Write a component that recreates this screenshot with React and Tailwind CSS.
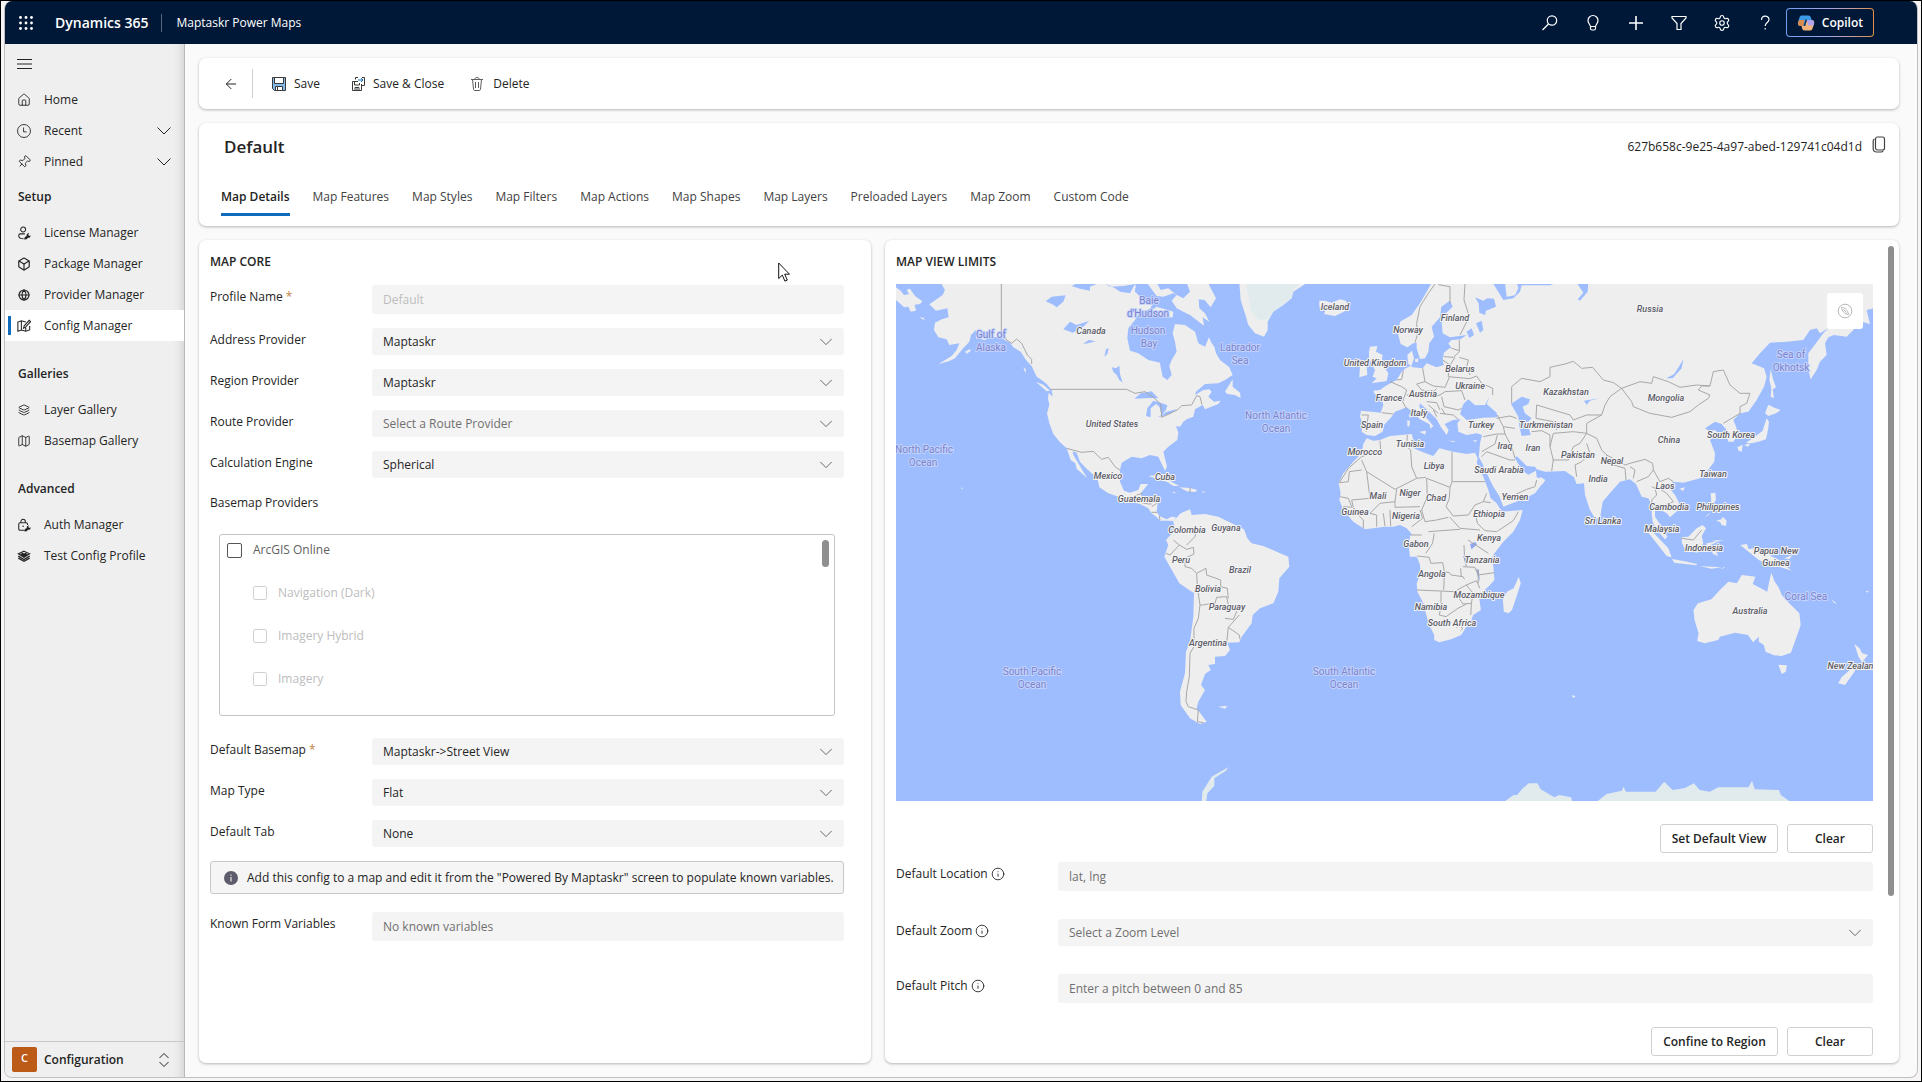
import { ArrowLeft, Box, Globe, House, Info, Layers, Map as MapIcon, Pin, Settings } from "lucide-react";

const tabs = [
  "Map Details",
  "Map Features",
  "Map Styles",
  "Map Filters",
  "Map Actions",
  "Map Shapes",
  "Map Layers",
  "Preloaded Layers",
  "Map Zoom",
  "Custom Code",
];

const navGroups = [
  {
    items: [
      { label: "Home", icon: House },
      { label: "Recent", icon: ClockIcon, expandable: true },
      { label: "Pinned", icon: PinIcon, expandable: true },
    ],
  },
  {
    title: "Setup",
    items: [
      { label: "License Manager", icon: LicenseIcon },
      { label: "Package Manager", icon: BoxIcon },
      { label: "Provider Manager", icon: GlobeIcon },
      { label: "Config Manager", icon: ConfigIcon, active: true },
    ],
  },
  {
    title: "Galleries",
    items: [
      { label: "Layer Gallery", icon: LayersIcon },
      { label: "Basemap Gallery", icon: MapIcon },
    ],
  },
  {
    title: "Advanced",
    items: [
      { label: "Auth Manager", icon: AuthIcon },
      { label: "Test Config Profile", icon: TestIcon },
    ],
  },
];

function PinIcon({ className }) {
  return <Pin className={`${className} rotate-45`} strokeWidth={1.5} />;
}

function BoxIcon({ className }) {
  return <Box className={className} strokeWidth={2} />;
}

function GlobeIcon() {
  return <Globe className="h-3 w-3" strokeWidth={2.4} />;
}

function LayersIcon() {
  return <Layers className="h-3 w-3" strokeWidth={1.8} />;
}

function ClockIcon({ className }) {
  return (
    <svg viewBox="0 0 16 16" className={className} fill="none" stroke="currentColor">
      <circle cx="8" cy="8" r="7.400" />
      <path d="M7.500 4v5H11" />
    </svg>
  );
}

function Chevron({ className }) {
  return (
    <svg viewBox="0 0 16 16" className={className} fill="none" stroke="currentColor">
      <path d="M1.500 4.500L8 11l6.500-6.500" />
    </svg>
  );
}

function LicenseIcon({ className }) {
  return (
    <svg viewBox="0 0 16 16" className={className} fill="none" stroke="currentColor" strokeWidth="1.2">
      <circle cx="7" cy="4" r="2.8" />
      <path d="M9 9H3.5C2 9 2 10.500 2 11c0 2 2 3.500 5.500 3.500" />
      <path d="M8 15.500l1-3 2-1c-.5-2 1-3.500 3-3l-1.300 1.600 1.300 1.400 1.500-1c.3 2-1.200 3.300-3 3L11 15z" fill="currentColor" stroke="none" />
    </svg>
  );
}

function ConfigIcon({ className }) {
  return (
    <svg viewBox="0 0 16 16" className={className} fill="none" stroke="currentColor" strokeWidth="1.200">
      <path d="M10 3.500L5 2 1 3.500v10.500l4-1.500 5 1.500 4.500-1.500V8M5 2v10.500" />
      <path d="M7.500 10.500l.7-2.700L14 1.500l1.500 1.500-5.700 6.300zM10 10v4" />
    </svg>
  );
}

function AuthIcon({ className }) {
  return (
    <svg viewBox="0 0 16 16" className={className} fill="none" stroke="currentColor" strokeWidth="1.200">
      <path d="M9 14H3.500C2.500 14 2 13.500 2 12.500V7c0-1 .5-1.500 1.500-1.500h7c1 0 1.500.5 1.500 1.500v1" />
      <path d="M4.500 5.500V4c0-3.500 5-3.500 5 0v1.500" />
      <circle cx="7" cy="9.500" r=".9" fill="currentColor" stroke="none" />
      <path d="M8.500 15.500l.7-3 2-1c-.5-2 1-3.300 2.800-3l-1.200 1.600 1.200 1.400 1.600-1c.3 2-1.200 3.300-3 3L11 15z" fill="currentColor" stroke="none" />
    </svg>
  );
}

function TestIcon({ className }) {
  return (
    <svg viewBox="0 0 16 16" className={className} fill="none" stroke="currentColor" strokeWidth="1.200">
      <path d="M8 2.500l6.500 3L8 9.500l-6.500-4z" />
      <path d="M4.500 6l2-1 1.500 1 1.500-1 2 1L8 9z" fill="currentColor" />
      <path d="M1.500 8.200L8 12l6.500-3.800M1.500 10.500L8 14l6.500-3.500" strokeWidth="1.500" />
    </svg>
  );
}

function SaveIcon({ close }) {
  if (close) {
    return (
      <svg viewBox="0 0 16 16" className="h-4 w-4" fill="none" stroke="#3b3a39">
        <path d="M8 5.500H2.500v9h9V8" />
        <path d="M4.500 5.500v3.500h5V7M5 14.500v-3h4v3M7 12v2" />
        <path d="M5.500 3.500v-2H8M12 1.500h2.500v8H12" />
        <path d="M8 4h5M11 2l2 2-2 2" stroke="#0f6cbd" />
      </svg>
    );
  }
  return (
    <svg viewBox="0 0 16 16" className="h-4 w-4" fill="none" stroke="#3b3a39">
      <path d="M1.500 1.500h13v13h-11l-2-2z" fill="#83b9eb" />
      <path d="M3.500 1.500h9v6h-9zM4.500 10.500h7v4h-7z" fill="#fff" />
      <path d="M6.500 11v3" />
    </svg>
  );
}

function TrashIcon() {
  return (
    <svg viewBox="0 0 14 16" className="h-4 w-3.5" fill="none" stroke="#605e5c">
      <path d="M1 3.500h12M5 3.500v-1c0-1.300 4-1.300 4 0v1M2.500 3.500l1 9.500c.1 1 .5 1.500 1.500 1.500h4c1 0 1.400-.5 1.500-1.500l1-9.500M5.500 6v6M8.500 6v6" />
    </svg>
  );
}

function CopyIcon() {
  return (
    <svg viewBox="0 0 14 18" className="h-[18px] w-3.5" fill="none" stroke="#424242" strokeWidth="1.200">
      <rect x="3.500" y="1" width="9" height="13" rx="2" />
      <path d="M2.500 3C1.500 3.500 1.200 4 1.200 5v7.500c0 2.500 1.300 3.500 3.500 3.500H9c1 0 1.800-.5 2-1.200" />
    </svg>
  );
}

function CopilotLogo() {
  return (
    <svg viewBox="0 0 18 18" className="h-[18px] w-[18px]">
      <path d="M5 1.500h6.500c1.500 0 2 1 2.500 2.500L15 7H9.500L8 12H3.500C1 12 .5 10 1 8l1.500-4.500C3 2 3.700 1.500 5 1.500z" fill="#3b9be8" />
      <path d="M1 9.500L2 6h5.500L6.300 12H3.500C1.500 12 .8 11 1 9.500z" fill="#d98a4c" />
      <path d="M13 16.500H7.500C6 16.500 5.300 15.500 5 14l-.5-2H8l2-6h4.500c2.500 0 3 2 2.500 4l-1.500 4.500c-.5 1.500-1.200 2-2.500 2z" fill="#f2b47c" />
      <path d="M10 6h4.500c2.500 0 3 2 2.500 4l-.5 1.500H11z" fill="#b3a4ee" />
      <path d="M8.500 5.500H10l-2 6.500H6.700z" fill="#12315f" />
    </svg>
  );
}

function HeaderIcon({ label, children }) {
  return (
    <button aria-label={label}>
      <svg viewBox="0 0 18 18" className="h-[18px] w-[18px]" fill="none" stroke="currentColor" strokeWidth="1.200">
        {children}
      </svg>
    </button>
  );
}

function Header() {
  return (
    <header className="flex h-[43px] shrink-0 items-center bg-[#001838] pl-3.5 pr-[43px] text-white">
      <button aria-label="App launcher">
        <svg viewBox="0 0 14 14" className="h-3.5 w-3.5" fill="currentColor">
          {[0, 5.5, 11].map((y) =>
            [0, 5.5, 11].map((x) => <circle key={`${x}-${y}`} cx={x + 1.5} cy={y + 1.5} r="1.400" />)
          )}
        </svg>
      </button>
      <span className="ml-[22px] text-[14px] font-semibold">Dynamics 365</span>
      <span className="ml-[13px] h-[18px] w-px bg-[#5a6478]" />
      <span className="ml-3.5 text-[12px]">Maptaskr Power Maps</span>
      <div className="ml-auto flex items-center gap-[25px]">
        <HeaderIcon label="Search">
          <circle cx="11" cy="6.500" r="4.700" />
          <path d="M7.500 10L1.500 16" />
        </HeaderIcon>
        <HeaderIcon label="Ideas">
          <path d="M6.500 12.500C6.300 10.500 4 9.500 4 6.500a5 5 0 0110 0c0 3-2.300 4-2.500 6zM6.500 12.500v2c0 1 .5 1.500 1.500 1.500h2c1 0 1.500-.5 1.500-1.500v-2" />
        </HeaderIcon>
        <HeaderIcon label="New">
          <path d="M9 2v14M2 9h14" strokeWidth="1.600" />
        </HeaderIcon>
        <HeaderIcon label="Filter">
          <path d="M2 2.500h14v1.500l-5 5.500V15.500H7V9.500L2 4z" />
        </HeaderIcon>
        <button aria-label="Settings">
          <Settings className="h-[18px] w-[18px]" strokeWidth={1.5} />
        </button>
        <HeaderIcon label="Help">
          <path d="M5.500 6c0-5 7.500-5 7.500-.5C13 8.500 9.200 8.500 9.200 12M9.200 14v1.600" />
        </HeaderIcon>
      </div>
      <button className="ml-3 rounded-[4px] bg-gradient-to-r from-[#6ea0f0] via-[#a9a3e6] to-[#e0903f] p-px">
        <span className="flex h-[27px] items-center gap-[7px] rounded-[3px] bg-[#001838] px-2.5 text-[12px] font-semibold">
          <CopilotLogo />
          Copilot
        </span>
      </button>
    </header>
  );
}

function NavItem({ label, icon: Icon, active, expandable }) {
  return (
    <a
      href="#"
      className={`relative flex h-[31px] items-center pl-3 pr-3 ${active ? "bg-white" : ""}`}
    >
      {active && <span className="absolute left-[3px] h-[19px] w-[3px] bg-[#0f6cbd]" />}
      <span className="flex w-3.5 justify-center">
        <Icon className="h-3.5 w-3.5 shrink-0" strokeWidth={1.5} />
      </span>
      <span className="ml-[13px]">{label}</span>
      {expandable && <Chevron className="ml-auto h-4 w-4" />}
    </a>
  );
}

function Sidebar() {
  return (
    <aside className="flex w-[180px] shrink-0 flex-col border-r border-[#b8b8b8] bg-[#efefef] shadow-[inset_-12px_0_12px_-12px_rgba(0,0,0,0.18)]">
      <button aria-label="Toggle navigation" className="flex h-10 items-center pl-3">
        <svg viewBox="0 0 15 10" className="h-2.5 w-[15px]" stroke="currentColor">
          <path d="M0 .5h15M0 5h15M0 9.500h15" />
        </svg>
      </button>
      <nav>
        {navGroups.map((group, i) => (
          <div key={i} className={i > 1 ? "mt-[13px]" : ""}>
            {group.title && (
              <h2 className="flex h-10 items-center pl-[13px] font-semibold">{group.title}</h2>
            )}
            {group.items.map((item) => (
              <NavItem key={item.label} {...item} />
            ))}
          </div>
        ))}
      </nav>
      <button className="mt-auto flex h-9 items-center border-t border-[#c8c8c8] pl-[7px] pr-3.5 font-semibold">
        <span className="flex h-[25px] w-[25px] items-start justify-center rounded-[2px] bg-[#bc5a17] pt-[3px] text-[11px] text-white">
          C
        </span>
        <span className="ml-[7px]">Configuration</span>
        <svg viewBox="0 0 12 16" className="ml-auto h-4 w-3" fill="none" stroke="currentColor">
          <path d="M1.500 6L6 1.500 10.500 6M1.500 10L6 14.500l4.500-4.500" />
        </svg>
      </button>
    </aside>
  );
}

function Card({ className, children }) {
  return (
    <section className={`rounded-[7px] bg-white shadow-[0_1px_3px_rgba(0,0,0,0.28)] ${className}`}>
      {children}
    </section>
  );
}

function CommandBar() {
  return (
    <Card className="flex h-[51px] shrink-0 items-center pl-6">
      <button aria-label="Back">
        <ArrowLeft className="h-4 w-4" strokeWidth={1.5} />
      </button>
      <span className="ml-[13px] h-[29px] w-px bg-[#d1d1d1]" />
      <button className="ml-[18px] flex items-center gap-[7px]">
        <SaveIcon /> Save
      </button>
      <button className="ml-[30px] flex items-center gap-[7px]">
        <SaveIcon close /> Save &amp; Close
      </button>
      <button className="ml-[26px] flex items-center gap-[9px]">
        <TrashIcon /> Delete
      </button>
    </Card>
  );
}

function RecordHeader() {
  return (
    <Card className="flex h-[103px] shrink-0 flex-col">
      <div className="flex h-12 items-center pl-[25px] pr-[13px]">
        <h1 className="text-[17px] font-semibold">Default</h1>
        <span className="ml-auto text-[12px]">627b658c-9e25-4a97-abed-129741c04d1d</span>
        <button aria-label="Copy id" className="mb-1 ml-2.5">
          <CopyIcon />
        </button>
      </div>
      <div role="tablist" className="mt-3 flex gap-[23px] pl-[22px]">
        {tabs.map((tab, i) => (
          <button
            key={tab}
            role="tab"
            aria-selected={i === 0}
            className={`h-[33px] border-b-[3px] pb-[3px] ${
              i === 0
                ? "border-[#0f6cbd] font-semibold text-[#242424]"
                : "border-transparent text-[#424242]"
            }`}
          >
            {tab}
          </button>
        ))}
      </div>
    </Card>
  );
}

function Field({ id, label, required, info, children }) {
  return (
    <div className="flex items-start">
      <label htmlFor={id} className="flex w-[162px] shrink-0 items-center gap-[3px] leading-[23px]">
        {label}
        {required && <span className="text-[#c4834a]">*</span>}
        {info && <Info className="h-3.5 w-3.5" strokeWidth={1.5} />}
      </label>
      {children}
    </div>
  );
}

function TextInput({ id, ...props }) {
  return (
    <input
      id={id}
      type="text"
      className="h-[29px] min-w-0 flex-1 rounded-[3px] bg-[#f4f4f4] px-[11px] placeholder:text-[#707070] disabled:placeholder:text-[#bdbdbd]"
      {...props}
    />
  );
}

function SelectInput({ id, value, muted }) {
  return (
    <div className="relative flex-1">
      <select
        id={id}
        className={`block h-[27px] w-full appearance-none rounded-[3px] bg-[#f4f4f4] px-[11px] ${
          muted ? "text-[#707070]" : "text-[#242424]"
        }`}
      >
        <option>{value}</option>
      </select>
      <Chevron className="pointer-events-none absolute right-[11px] top-[7px] h-3.5 w-3.5 text-[#555]" />
    </div>
  );
}

function BasemapList() {
  return (
    <div className="relative mx-[9px] mt-5 h-[182px] overflow-hidden rounded-[3px] border border-[#c4c4c4] pl-[7px] pt-[7px]">
      <label className="flex h-4 items-center gap-[11px] text-[#616161]">
        <input type="checkbox" className="h-[15px] w-[15px] appearance-none rounded-[2px] border border-[#555]" />
        ArcGIS Online
      </label>
      <div className="mt-[27px] flex flex-col gap-[27px] pl-[26px]">
        {["Navigation (Dark)", "Imagery Hybrid", "Imagery"].map((name) => (
          <label key={name} className="flex h-4 items-center gap-[11px] text-[#bdbdbd]">
            <input
              type="checkbox"
              disabled
              className="h-3.5 w-3.5 appearance-none rounded-[2px] border border-[#d1d1d1]"
            />
            {name}
          </label>
        ))}
      </div>
      <span className="absolute right-[5px] top-[5px] h-[27px] w-[7px] rounded-full bg-[#8f8f8f]" />
    </div>
  );
}

function MapCore() {
  return (
    <Card className="relative flex w-[672px] shrink-0 flex-col pl-[11px] pr-[27px] pt-[13px]">
      <h2 className="h-8 font-semibold leading-[18px]">MAP CORE</h2>
      <div className="flex flex-col gap-3.5">
        <Field id="profile" label="Profile Name" required>
          <TextInput id="profile" placeholder="Default" disabled />
        </Field>
        <Field id="address" label="Address Provider">
          <SelectInput id="address" value="Maptaskr" />
        </Field>
        <Field id="region" label="Region Provider">
          <SelectInput id="region" value="Maptaskr" />
        </Field>
        <Field id="route" label="Route Provider">
          <SelectInput id="route" value="Select a Route Provider" muted />
        </Field>
        <Field id="engine" label="Calculation Engine">
          <SelectInput id="engine" value="Spherical" />
        </Field>
        <div>
          <h3 className="leading-[22px]">Basemap Providers</h3>
          <BasemapList />
        </div>
      </div>
      <div className="mt-[22px] flex flex-col gap-3.5">
        <Field id="basemap" label="Default Basemap" required>
          <SelectInput id="basemap" value="Maptaskr->Street View" />
        </Field>
        <Field id="type" label="Map Type">
          <SelectInput id="type" value="Flat" />
        </Field>
        <Field id="tab" label="Default Tab">
          <SelectInput id="tab" value="None" />
        </Field>
        <div className="flex h-[33px] items-center gap-[9px] whitespace-nowrap rounded-[3px] border border-[#c8c8c8] bg-[#f5f5f5] pl-[13px]">
          <svg viewBox="0 0 14 14" className="h-3.5 w-3.5">
            <circle cx="7" cy="7" r="7" fill="#5c5c6c" />
            <path d="M7 6v4.500M7 3.500v1.200" stroke="#e8e8e8" strokeWidth="1.200" />
          </svg>
          Add this config to a map and edit it from the "Powered By Maptaskr" screen to populate known variables.
        </div>
      </div>
      <div className="mt-[18px]">
        <Field id="known" label="Known Form Variables">
          <TextInput id="known" placeholder="No known variables" />
        </Field>
      </div>
      <svg viewBox="0 0 12 20" className="absolute left-[579px] top-[22px] h-5 w-3">
        <path d="M.7 1v15.500l3.600-3.400 2.600 6 2.400-1-2.600-5.900h4.800z" fill="#fff" stroke="#111" />
      </svg>
    </Card>
  );
}

// Coast lines, in thirds of a pixel. Each sheet is placed by its own transform.
const northWest = [
  "18,22 32,32 42,45 57,42 50,30 60,26 75,48 97,64 90,72 74,74 78,92 62,95 55,80 42,82 32,72 18,60",
  "88,112 100,113 106,119 96,117",
  "152,8 165,30 158,45 125,68 118,73 138,92 172,85 176,112 155,118 135,128 132,150 145,172 170,178 178,195 208,190 200,210 185,228 145,253 178,243 195,235 215,210 238,185 243,165 258,150 258,175 285,180 310,170 335,175 360,188 370,202 392,215 408,240 425,258 440,290 455,300 470,312 485,330 488,350 476,338 474,355 478,375 471,400 478,430 490,462 510,487 530,505 542,540 556,550 560,566 575,580 592,595 578,572 565,550 550,525 548,514 560,518 570,545 585,562 605,580 622,595 628,622 655,640 690,652 720,665 750,672 775,685 785,700 800,712 812,722 835,722 852,724 858,712 845,710 830,718 808,708 800,695 803,670 785,662 758,660 752,640 775,612 752,612 745,630 720,638 702,632 690,605 690,570 695,548 725,530 755,535 780,525 805,530 812,545 825,572 831,560 820,515 835,500 862,480 865,458 858,438 870,440 880,425 890,418 910,410 915,388 938,375 945,388 985,372 992,362 972,365 955,350 965,335 958,328 940,330 915,345 918,335 945,312 985,310 1005,300 1020,290 1028,285 1018,262 990,240 978,220 973,200 965,190 957,172 945,200 925,190 915,155 885,135 855,132 848,160 855,185 860,215 845,240 838,258 845,285 832,300 818,290 812,262 810,248 775,240 745,220 720,212 712,175 715,145 735,120 748,100 780,86 792,64 760,60 740,40 735,8",
  "770,8 800,8 812,30 835,25 860,45 845,62 860,85 880,95 900,105 942,137 938,112 958,125 945,100 928,85 926,58 944,60 962,82 978,55 960,20 955,8 890,8 900,35 880,55 850,40 820,50 800,48",
  "778,95 800,80 850,95 848,112 820,112 795,108",
  "225,215 240,207 242,213 230,221",
  "438,306 460,314 480,332 470,334",
  "400,262 408,268 406,280",
  "775,588 800,585 830,598 868,618 850,618 832,606 800,596",
  "868,622 900,624 922,630 915,636 890,634",
  "848,635 860,638 850,640",
  "936,634 947,635 938,638",
  "214,622 219,625 215,628",
  "1005,335 1028,298 1028,320 1050,338 1052,354 1035,345 1012,342",
];

const northWestWater = [
  "467,64 485,50 527,46 520,65 500,82 490,74",
  "520,148 540,125 560,135 598,122 575,145 548,158",
  "578,192 596,180 617,184 600,188",
  "643,230 648,207 656,205 652,222",
  "665,262 670,275 680,285 688,300 698,308 690,282 688,257 678,265",
  "733,356 752,340 785,334 805,355 775,354",
  "790,362 812,368 832,376 828,390 815,405 808,380 798,372 782,385 782,412 768,408 772,385",
  "803,412 830,395 862,387 840,402",
  "545,18 565,8 630,8 600,20 600,32 570,26",
  "640,8 660,20 700,18 735,12 720,40 690,35 675,25",
  "735,24 770,40 760,50 735,36",
];

const northEast = [
  "635,8 620,35 600,70 575,105 540,125 535,165 542,192 562,202 580,190 590,188 590,205 600,237 615,235 625,215 628,190 642,170 635,140 660,112 664,80 690,62 698,80 672,105 665,130 668,160 690,172 740,165 722,178 695,180 685,190 695,205 688,205 672,218 668,240 672,255 650,262 620,250 608,265 578,262 565,252 562,225 576,212 582,235 575,256 555,266 545,275 530,300 500,316 480,330 460,332 464,342 485,352 490,375 482,398 455,395 423,392 420,410 428,430 425,455 440,465 465,468 488,455 492,435 515,410 525,395 545,388 560,382 578,395 600,418 628,432 632,446 640,438 612,405 598,380 600,370 625,393 650,418 662,440 680,465 686,450 674,432 700,420 722,418 712,430 715,455 740,465 770,460 786,465 780,490 778,515 776,530 786,548 800,580 820,620 838,648 850,680 915,655 945,640 975,600 950,592 948,572 925,584 905,570 885,535 890,528 920,558 945,560 950,568 975,575 1035,573 1062,592 1070,612 1092,610 1095,645 1110,690 1125,715 1140,715 1148,665 1165,645 1200,605 1230,598 1248,612 1265,650 1285,655 1298,680 1295,700 1298,725 1310,750 1335,778 1342,770 1322,735 1305,710 1305,685 1322,690 1340,700 1350,712 1375,690 1378,670 1365,645 1345,620 1360,605 1390,608 1440,595 1460,575 1483,545 1485,520 1470,480 1495,460 1485,450 1470,455 1455,445 1485,425 1505,432 1520,450 1525,485 1540,485 1550,470 1550,445 1540,420 1560,400 1585,395 1610,360 1632,320 1640,290 1632,265 1595,250 1620,220 1650,188 1700,185 1750,180 1770,150 1790,145 1800,160 1825,145 1810,160 1780,200 1765,220 1765,270 1772,298 1790,270 1800,245 1820,225 1815,190 1825,172 1842,165 1880,170 1905,145 1925,125 1950,132 1940,90 1962,85 1962,8",
  "58,8 62,60 78,110 85,135 105,160 132,170 143,150 143,125 160,95 190,75 215,55 220,35 262,8",
  "298,62 315,62 335,68 360,58 378,62 385,80 372,95 345,108 312,102 316,92 298,82",
  "450,200 472,198 468,215 488,225 485,245 495,265 505,280 500,303 455,310 470,295 458,290 465,270 455,250 447,235 447,215",
  "420,258 440,252 442,285 418,292",
  "585,238 595,235 594,246 586,246",
  "598,455 618,452 616,464",
  "562,420 570,424 568,440 562,438",
  "566,402 571,405 569,416",
  "685,482 708,483 700,486",
  "758,482 772,480 766,486",
  "440,475 460,482 480,480 510,468 575,462 580,480 572,500 605,515 640,528 658,505 700,515 740,522 765,518 773,535 770,548 790,590 805,630 812,655 830,670 845,695 908,690 900,720 880,755 850,785 815,830 570,830 566,795 578,765 560,745 540,735 520,740 495,740 435,748 400,725 370,690 358,660 362,640 356,610 370,580 400,545 425,520 430,492",
  "960,590 976,600 968,612 960,616",
  "1150,710 1162,722 1156,735 1148,730",
  // Japan, Sakhalin, Taiwan, Hainan, Philippines
  "1635,400 1645,374 1660,382 1682,390 1668,400 1645,408",
  "1640,415 1647,425 1645,445 1638,478 1615,485 1595,490 1578,488 1605,470 1628,452 1635,430",
  "1552,502 1568,494 1565,515 1556,512",
  "1572,495 1590,490 1585,500",
  "1652,268 1660,300 1668,322 1658,328 1662,355 1652,350 1654,325 1648,300",
  "1474,582 1484,580 1480,598",
  "1378,626 1394,622 1390,633",
  "1472,640 1486,638 1488,660 1478,672 1492,690 1475,680",
  "1488,722 1505,718 1508,710 1520,722 1518,738 1505,735 1500,726",
  "1454,712 1470,698 1465,706",
  // Sumatra and Borneo
  "1272,742 1295,752 1345,805 1355,832 1340,828 1310,790",
  "1385,772 1405,770 1430,745 1448,735 1458,745 1445,768 1450,790 1432,818 1398,812 1386,790",
  "1475,782 1510,780 1490,786",
];

const northEastWater = [
  "765,52 790,62 802,55 822,56 828,80 798,92 795,105 778,98 776,70",
  "818,8 855,8 860,50 885,46 895,25 890,8 1010,8 990,16 905,16 900,35 880,55 850,60",
  "740,155 755,145 762,165 748,174",
  "768,130 785,122 790,150 780,158",
  "720,402 730,372 745,358 765,376 795,375 808,350 800,372 830,398 832,412 790,413 740,420",
  "873,372 905,350 930,358 925,372 908,380 915,400 935,415 922,428 932,465 905,468 898,440 895,410",
  "1092,362 1138,355 1110,362 1100,374",
  "1390,238 1385,265 1358,295 1338,295 1362,283 1378,258",
  "1070,8 1105,8 1103,35 1080,62 1073,58 1090,38",
  "700,420 712,430 700,440 690,425",
];

const southAmerica = [
  "850,-56 872,-80 900,-92 905,-75 945,-78 985,-70 1025,-50 1062,-32 1072,-5 1085,10 1120,18 1160,35 1195,50 1198,80 1168,115 1165,155 1150,190 1110,205 1088,225 1085,250 1055,290 1048,307 1012,308 1020,330 1005,348 975,350 975,372 955,375 962,390 945,402 933,435 945,450 925,485 920,505 950,545 930,552 900,535 872,495 870,455 885,400 888,335 900,305 910,230 912,160 868,130 840,80 823,50 835,15 828,0 855,-30",
  "985,500 1012,497 1005,506",
];

const southEast = [
  "130,-30 392,-30 392,0 375,25 360,55 365,80 368,120 350,140 322,165 328,210 305,225 300,240 285,260 270,285 240,298 205,307 190,300 190,285 175,255 165,220 158,190 140,155 138,130 150,100 148,75 135,40 115,20 118,-10",
  "440,110 446,130 435,165 420,210 410,220 396,215 393,180 405,155 425,145",
  "957,210 970,190 1010,178 1035,150 1060,125 1085,130 1100,105 1140,110 1132,132 1175,155 1182,120 1187,98 1197,125 1208,140 1218,165 1240,190 1270,220 1274,255 1262,290 1245,338 1218,348 1195,346 1170,335 1165,315 1150,305 1150,290 1133,307 1118,285 1080,278 1035,290 1030,300 990,310 968,303 972,280 960,240",
  "1208,374 1233,376 1230,395 1218,402",
  "1433,312 1448,325 1456,340 1473,345 1455,367 1445,350",
  "1425,385 1435,392 1405,435 1385,430 1395,412",
  "893,57 930,64 968,72 965,76 900,68",
  "975,78 1010,80 1040,82 1010,86",
  "1035,88 1050,80 1048,84",
  "995,10 1030,4 1008,15 1020,28 1030,48 1015,42 1005,22 1000,38",
  "1095,15 1115,12 1120,28 1150,22 1190,50 1210,60 1225,75 1248,92 1215,82 1180,75 1150,60 1120,35",
  "1225,55 1250,45 1240,58",
  "1365,178 1382,192 1372,188",
  "1466,154 1476,152 1470,158",
  "596,466 608,468 602,474",
];

const ice = [
  "78,8 85,50 92,90 115,120 143,118 160,92 190,72 213,55 220,30 240,8",
];

const borders = {
  northWest: [
    "334,12 334,155 350,180 365,190 380,177 395,190 412,225 425,238 425,252",
    "482,328 710,328 735,340 765,335 790,352 812,372 815,412 862,390 875,377 905,375 920,347 930,350 936,374",
    "530,505 575,517 610,514 635,538 655,532 675,560 690,570",
    "735,660 740,645 758,640 M755,668 775,672 785,672 M785,680 800,670 M785,697 802,697 M808,708 810,720 M900,622 900,638",
    "900,690 888,712 895,728 915,732 920,752 915,790 M920,745 945,755 945,778 965,770 958,755 970,750 M985,718 1000,735 995,755 1005,775 1040,770 M845,785 870,790 890,805",
  ],
  northEast: [
    "585,188 592,165 590,130 600,80 625,40 645,12 M655,14 690,20 690,70 M735,12 732,60 748,110 720,165",
    "718,180 718,215 700,232 672,230 M695,205 718,212 M718,232 745,240 740,262 750,285 M668,240 690,255 705,232 M686,262 685,290 750,296 770,288 785,310 818,325 818,345 M608,265 615,305 640,318 675,322 688,292",
    "510,305 545,320 560,330 548,365 560,388 M530,300 545,298 550,272 M590,312 615,305 M590,312 605,330 640,335 650,325 M560,345 600,350 640,350 660,345 675,335 M675,335 725,332 735,360 M665,350 672,380 715,390 725,385 M620,365 650,368 660,390 M625,375 655,400 M640,390 650,410 M660,400 700,405 715,418 M665,385 675,402",
    "425,405 445,405 438,455 M485,398 520,402",
    "480,482 482,510 425,530 385,565 358,608 385,605 388,575 425,570 M440,575 525,628 590,595 575,560 572,510 560,500 562,465 M440,575 450,655 395,660 M425,540 440,575",
    "696,515 696,605 795,605 M620,595 690,622 688,655 678,680 M696,605 690,622 M620,595 622,650 605,690 615,725 M590,595 618,592 M530,628 525,665 480,670 450,700 M525,665 525,682 600,680 M360,650 385,655 395,680 M395,660 400,682 370,680 M400,690 430,720 430,745 M450,700 470,705 470,740 M490,700 495,738 M510,690 512,738 M600,690 608,715 575,740",
    "678,680 700,708 745,705 765,675 790,665 812,668 M790,665 800,640 M765,690 772,730 795,752 830,755 880,722 895,695 M690,712 720,745 780,750 M615,725 650,720 685,712 M625,755 720,748 M572,765 605,765",
    "830,415 870,408 890,415 M832,405 850,440 885,445 M850,440 855,462 M790,470 830,462 855,462 875,500 885,535 M785,515 825,492 832,465 M785,530 800,515 870,540 885,540 M850,660 920,628 945,620 950,600 M935,455 965,452 990,465 990,500 1000,540 995,573",
    "875,370 875,320 905,295 960,305 990,290 990,262 1035,252 1060,244 1085,265 1118,262 1150,300 1180,308 1205,325 1260,305 1295,310 1300,290 1345,305 1380,322 1430,315 1470,318",
    "1205,325 1235,365 1240,380 1290,400 1355,412 1410,395 1435,375 1465,355 1470,345 1435,330 1445,318 1470,318 1480,275 1510,270 1530,315 1560,340 1590,340 1580,370 1560,380 1560,400 1510,430",
    "1205,325 1170,350 1155,375 1145,405 1100,430 1100,460 1130,475 1145,510 1160,525 1215,555 1230,550 1275,538 1298,550 1300,570 1320,605 1345,595 1360,605",
    "950,375 1000,390 1050,405 1060,420 1100,405 1145,405 M950,375 948,415 1000,425 1010,450 M990,500 1000,460 1060,455 1100,460 1080,490 1060,500 1045,540 998,540 M1100,490 1110,520 1085,545 1065,555 1070,590 M1160,525 1165,550 1215,565 M1215,565 1218,600 M1230,560 1245,570 1240,595 M1300,570 1285,590 1250,605 M1295,620 1305,625 1310,645 1295,660 1300,690 M1310,620 1340,640 1360,665 1335,675",
    "1385,775 1420,780 1445,750",
  ],
  southAmerica: [
    "828,40 840,45 868,15 850,0 M868,15 890,28 910,22 912,42 885,55 885,80 905,85 920,100 922,140 912,158 M920,100 948,85 950,105 992,120 992,140 1012,145 1015,175 M922,140 930,195 940,195 965,190 975,190 980,172 1010,170 1015,195 1040,215 1030,238 1005,235 M1048,225 1015,262 1048,285 1050,298 M1015,262 1010,308 M930,195 925,235 912,265 912,320 900,340 898,410 890,455 888,485 895,500 925,510 922,545 940,548 M890,15 915,-10 920,-40",
  ],
  southEast: [
    "140,48 175,52 180,70 215,68 220,95 235,98 240,105 275,110 280,118 M138,150 250,155 M210,155 210,200 205,225 225,230 260,205 285,192 M220,98 218,150 M165,40 185,10 190,-20 M275,80 310,82 320,105 368,98 M320,88 320,130 M250,155 285,135 315,122 325,145 M250,155 275,192 300,190 305,160 285,135 M300,190 298,225 M270,110 268,85 M278,15 280,60 285,80 M290,0 350,40 M255,262 265,258 275,265 268,272",
  ],
};

const places = [
  ["Canada", 1091, 334], ["United States", 1112, 427], ["Mexico", 1108, 479], ["Cuba", 1165, 480],
  ["Guatemala", 1139, 502], ["Colombia", 1187, 533], ["Guyana", 1226, 531], ["Peru", 1181, 563],
  ["Brazil", 1240, 573], ["Bolivia", 1208, 592], ["Paraguay", 1227, 610], ["Argentina", 1208, 646],
  ["Iceland", 1335, 310], ["Norway", 1408, 333], ["Finland", 1455, 321], ["United Kingdom", 1375, 366],
  ["Belarus", 1460, 372], ["Ukraine", 1470, 389], ["France", 1389, 401], ["Austria", 1423, 397],
  ["Italy", 1419, 416], ["Spain", 1372, 428], ["Turkey", 1481, 428], ["Turkmenistan", 1546, 428],
  ["Morocco", 1365, 455], ["Tunisia", 1410, 447], ["Libya", 1434, 469], ["Iraq", 1505, 449],
  ["Iran", 1533, 451], ["Saudi Arabia", 1499, 473], ["Mali", 1378, 499], ["Niger", 1410, 496],
  ["Chad", 1436, 501], ["Yemen", 1515, 500], ["Guinea", 1355, 515], ["Nigeria", 1406, 519],
  ["Ethiopia", 1489, 517], ["Kenya", 1489, 541], ["Gabon", 1416, 547], ["Tanzania", 1482, 563],
  ["Angola", 1432, 577], ["Mozambique", 1479, 598], ["Namibia", 1431, 610], ["South Africa", 1452, 626],
  ["Russia", 1650, 312], ["Kazakhstan", 1566, 395], ["Mongolia", 1666, 401], ["China", 1669, 443],
  ["South Korea", 1731, 438], ["Pakistan", 1578, 458], ["Nepal", 1612, 464], ["India", 1598, 482],
  ["Taiwan", 1713, 477], ["Laos", 1665, 489], ["Cambodia", 1669, 510], ["Philippines", 1718, 510],
  ["Sri Lanka", 1603, 524], ["Malaysia", 1662, 532], ["Indonesia", 1704, 551], ["Papua New", 1776, 554],
  ["Guinea", 1776, 566], ["Australia", 1750, 614], ["New Zealand", 1853, 669],
];

const seas = [
  ["Gulf of", 991, 338], ["Alaska", 991, 351], ["Baie", 1149, 304], ["d'Hudson", 1148, 317],
  ["Hudson", 1148, 334], ["Bay", 1149, 347], ["Labrador", 1240, 351], ["Sea", 1240, 364],
  ["North Atlantic", 1276, 419], ["Ocean", 1276, 432], ["North Pacific", 924, 453], ["Ocean", 923, 466],
  ["South Pacific", 1032, 675], ["Ocean", 1032, 688], ["South Atlantic", 1344, 675], ["Ocean", 1344, 688],
  ["Sea of", 1791, 358], ["Okhotsk", 1791, 371], ["Coral Sea", 1806, 600],
];

function Shapes({ list, fill = "#eeeeee" }) {
  return list.map((points, i) => <polygon key={i} points={points} fill={fill} />);
}

function Lines({ list }) {
  return list.map((d, i) => (
    <path key={i} d={`M${d}`} fill="none" stroke="#a3a3a3" strokeWidth="2.800" strokeLinejoin="round" />
  ));
}

function WorldMap() {
  return (
    <svg
      viewBox="896 284 977 517"
      preserveAspectRatio="xMidYMid slice"
      className="block h-[517px] w-full bg-[#9ebdff]"
      role="img"
      aria-label="World map"
    >
      <g transform="translate(890 280) scale(.33333)">
        <Shapes list={northWest} />
        <Shapes list={northWestWater} fill="#9ebdff" />
        <Lines list={borders.northWest} />
      </g>
      <g transform="translate(890 540) scale(.33333)">
        <Shapes list={southAmerica} />
        <Lines list={borders.southAmerica} />
        <Shapes list={["935,790 937,755 965,710 1000,690 1015,682 1008,692 973,715 973,738 952,760 948,790"]} fill="#e1ebed" />
      </g>
      <g transform="translate(1220 280) scale(.33333)">
        <Shapes list={northEast} />
        <Shapes list={northEastWater} fill="#9ebdff" />
        <Shapes list={ice} fill="#e1ebed" />
      </g>
      <g transform="translate(1370 540) scale(.33807 .33333)">
        <Shapes list={southEast} />
        <Shapes list={["296,12 312,6 316,14 300,28", "286,78 280,60 275,48 283,50", "315,85 322,92 325,125 318,105"]} fill="#8fa8f0" />
        <Lines list={borders.southEast} />
        <Shapes
          list={[
            "390,790 425,765 435,765 452,745 470,730 495,730 505,748 545,772 560,765 595,772 598,790",
            "665,790 700,762 745,752 750,740 757,755 845,755 870,725 895,750 930,745 958,730 975,750 1005,755 1030,742 1120,742 1130,722 1138,748 1210,750 1215,765 1250,790",
          ]}
          fill="#e1ebed"
        />
      </g>
      <g transform="translate(1220 280) scale(.33333)">
        <Lines list={borders.northEast} />
      </g>
      <g
        textAnchor="middle"
        fontFamily="Roboto, sans-serif"
        paintOrder="stroke"
        strokeLinejoin="round"
        strokeWidth="2"
      >
        <g fontSize="10" fill="#7b83cf" stroke="#c3d3fb">
          {seas.map(([name, x, y]) => (
            <text key={`${name}${x}`} x={x} y={y}>
              {name}
            </text>
          ))}
        </g>
        <g fontSize="9" fontStyle="italic" fontWeight="500" fill="#5c5c66" stroke="#f4f4f6">
          {places.map(([name, x, y]) => (
            <text key={`${name}${x}`} x={x} y={y}>
              {name}
            </text>
          ))}
        </g>
      </g>
    </svg>
  );
}

function OutlineButton({ className, children }) {
  return (
    <button className={`h-[29px] rounded-[3px] border border-[#d1d1d1] font-semibold ${className}`}>
      {children}
    </button>
  );
}

function MapViewLimits() {
  return (
    <Card className="relative flex min-w-0 flex-1 flex-col pl-[11px] pr-[26px] pt-[13px]">
      <h2 className="h-[31px] font-semibold leading-[18px]">MAP VIEW LIMITS</h2>
      <div className="relative">
        <WorldMap />
        <button
          aria-label="Reset bearing"
          className="absolute right-2.5 top-[9px] flex h-9 w-9 items-center justify-center rounded-[3px] bg-white"
        >
          <svg viewBox="0 0 16 16" className="h-4 w-4" fill="none" stroke="#b5b5b5">
            <circle cx="8" cy="8" r="6.800" />
            <path d="M4.500 4.500c3-.5 6.500 3 7 7-3.500 0-6.500-3.500-7-7zM6.500 6.500l3 3" />
          </svg>
        </button>
      </div>
      <div className="mt-[23px] flex justify-end gap-[9px]">
        <OutlineButton className="w-[118px]">Set Default View</OutlineButton>
        <OutlineButton className="w-[86px]">Clear</OutlineButton>
      </div>
      <div className="mt-[9px] flex flex-col gap-7">
        <Field id="location" label="Default Location" info>
          <TextInput id="location" placeholder="lat, lng" />
        </Field>
        <Field id="zoom" label="Default Zoom" info>
          <SelectInput id="zoom" value="Select a Zoom Level" muted />
        </Field>
        <Field id="pitch" label="Default Pitch" info>
          <TextInput id="pitch" placeholder="Enter a pitch between 0 and 85" />
        </Field>
      </div>
      <div className="mt-6 flex justify-end gap-[9px]">
        <OutlineButton className="w-[127px]">Confine to Region</OutlineButton>
        <OutlineButton className="w-[86px]">Clear</OutlineButton>
      </div>
      <span className="absolute right-[5px] top-1.5 h-[650px] w-1.5 rounded-full bg-[#8f8f8f]" />
    </Card>
  );
}

export default function App() {
  return (
    <div className="h-screen border border-black bg-[#f7f4f6] px-[3px] pb-[3px] font-['Open_Sans',sans-serif] text-[12px] text-[#242424]">
      <div className="flex h-full flex-col overflow-hidden rounded-lg border border-t-0 border-[#c0c0c0] bg-[#fafafa]">
        <Header />
        <div className="flex min-h-0 flex-1">
          <Sidebar />
          <main className="flex min-w-0 flex-1 flex-col gap-3.5 pb-3.5 pl-3.5 pr-[18px] pt-3.5">
            <CommandBar />
            <RecordHeader />
            <div className="flex min-h-0 flex-1 gap-3.5">
              <MapCore />
              <MapViewLimits />
            </div>
          </main>
        </div>
      </div>
    </div>
  );
}
